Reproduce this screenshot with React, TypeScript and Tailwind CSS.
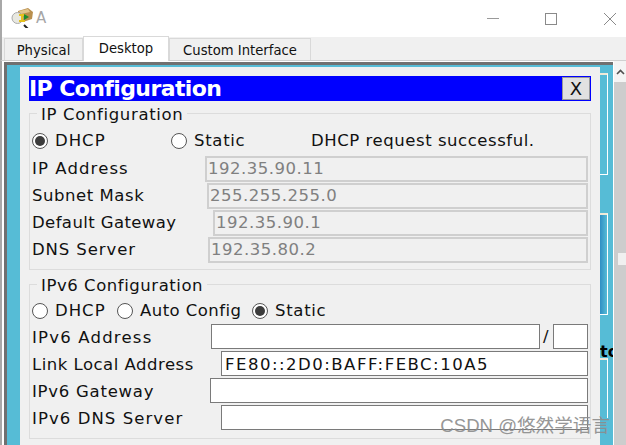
import React from 'react';

const Radio = ({ checked }: { checked?: boolean }) => (
  <span className="flex h-[16px] w-[16px] shrink-0 items-center justify-center rounded-full border border-[#555] bg-white">
    {checked && <span className="h-[10px] w-[10px] rounded-full bg-[#3c3c3c]" />}
  </span>
);

const ReadField = ({ label, left, value, mt }: { label: string; left: string; value: string; mt: string }) => (
  <div className={`flex h-[26px] items-center ${mt}`}>
    <span className={`${left} shrink-0 pt-[1px] whitespace-nowrap`}>{label}</span>
    <div className="flex h-full w-full items-center border-2 border-[#cfcfcf] bg-[#f0f0f0] pl-[1px] pt-[1px] tracking-[0.5px] text-[#808080]">{value}</div>
  </div>
);

const EditField = ({ label, left, value, mt }: { label: string; left: string; value?: string; mt: string }) => (
  <div className={`flex h-[25px] items-center ${mt}`}>
    <span className={`${left} shrink-0 pt-[4px] whitespace-nowrap`}>{label}</span>
    <div className="flex h-full w-full items-center border border-[#7a7a7a] bg-white pl-[3px] pt-[3px] tracking-[1.5px] text-[#111]">{value}</div>
  </div>
);

const Legend = ({ children, wide }: { children: React.ReactNode; wide?: boolean }) => (
  <span className={`absolute left-[7px] top-[-9px] bg-[#f0f0f0] px-[4px] leading-[20px] ${wide ? 'tracking-[0.55px]' : 'tracking-[0.65px]'}`}>{children}</span>
);

export default function App() {
  return (
    <div className="relative flex h-[445px] w-[626px] flex-col overflow-hidden bg-white font-['DejaVu_Sans',sans-serif] text-[16.5px] text-[#111]">
      {/* window title bar */}
      <div className="flex h-[37px] shrink-0 items-center border-l-2 border-[#a8a8a8] pl-[9px]">
        <svg width="22" height="22" viewBox="0 0 22 22" className="mt-[-3px]">
          <path d="M7 5 L17 2 L22 6 L21 13 L12 16 L8 12 Z" fill="#b98f4e" />
          <path d="M8 5 L17 3 L19 6 L10 8 Z" fill="#e2c58c" />
          <path d="M13 19 L17 23" stroke="#222" strokeWidth="2" />
          <circle cx="6.5" cy="12" r="5.5" fill="#e8e8e0" stroke="#aaa" />
          <path d="M8 8 H14 V10 H12 V14 H14 V16 H8 V14 H10 V10 H8 Z" fill="#e6c21c" />
          <path d="M13 8 L18 11 L13 14 Z" fill="#1c8c2c" />
        </svg>
        <span className="ml-[3px] text-[15px] text-[#a6a6a6]">A</span>
        <div className="ml-auto flex items-center">
          <span className="h-px w-[12px] bg-[#9a9a9a]" />
          <span className="ml-[46px] h-[12px] w-[12px] border border-[#8a8a8a]" />
          <svg width="14" height="14" viewBox="0 0 14 14" className="ml-[46px] mr-[9px]">
            <path d="M1 1 L13 13 M13 1 L1 13" stroke="#8a8a8a" strokeWidth="1" />
          </svg>
        </div>
      </div>

      {/* tab strip */}
      <div className="flex h-[24px] shrink-0 items-end border-b border-l-2 border-[#a8a8a8] border-b-[#d0d0d0] bg-[#f0f0f0] pl-[2px] text-[13.2px]">
        <div className="flex h-[22px] w-[79px] items-center justify-center border border-b-0 border-[#d9d9d9] pt-[2px]">Physical</div>
        <div className="flex h-[25px] w-[86px] translate-y-px items-center justify-center border-x border-t border-[#d9d9d9] bg-white pb-[1px]">Desktop</div>
        <div className="flex h-[22px] w-[142px] items-center justify-center border border-b-0 border-[#d9d9d9] pt-[2px]">Custom Interface</div>
      </div>

      {/* content */}
      <div className="flex min-h-0 flex-1 border-l-2 border-[#a8a8a8] pl-[2px]">
        <div className="mt-px flex min-w-0 flex-1 flex-col border-l-[3px] border-t-[3px] border-[#707070] bg-[#56bcd6]">
          <div className="flex min-h-0 flex-1 pt-[2px]">
            <div className="w-[13px] shrink-0" />
            {/* dialog */}
            <div className="h-[400px] w-[580px] shrink-0 bg-[#f0f0f0] pl-[9px] pr-[9px] pt-[9px]">
              <div className="flex h-[25px] items-center justify-between bg-[#0000ff] pr-px">
                <span className="text-[22px] font-bold leading-none tracking-[-0.6px] text-white">IP Configuration</span>
                <div className="flex h-[23px] w-[28px] items-center justify-center border border-[#999] bg-[#e1e1e1] text-[18px]">X</div>
              </div>

              <div className="relative mt-[12px] h-[157px] border border-[#dcdcdc] pl-[2px] pr-[2px]">
                <Legend>IP Configuration</Legend>
                <div className="flex h-[26px] items-center pt-[27px] leading-none">
                  <Radio checked />
                  <span className="ml-[7px] w-[116px] shrink-0 tracking-[1px]">DHCP</span>
                  <Radio />
                  <span className="ml-[7px] w-[117px] shrink-0 tracking-[0.7px]">Static</span>
                  <span className="whitespace-nowrap tracking-[0.55px]">DHCP request successful.</span>
                </div>
                <div className="mt-[15px]">
                  <ReadField label="IP Address" left="w-[173px] tracking-[1.1px]" value="192.35.90.11" mt="" />
                  <ReadField label="Subnet Mask" left="w-[175px] tracking-[0.55px]" value="255.255.255.0" mt="mt-px" />
                  <ReadField label="Default Gateway" left="w-[181px] tracking-[0.4px]" value="192.35.90.1" mt="mt-px" />
                  <ReadField label="DNS Server" left="w-[176px] tracking-[0.9px]" value="192.35.80.2" mt="mt-px" />
                </div>
              </div>

              <div className="relative mt-[14px] h-[155px] border border-[#dcdcdc] pl-[2px] pr-[2px]">
                <Legend wide>IPv6 Configuration</Legend>
                <div className="mt-[16px] flex h-[20px] items-center leading-none">
                  <Radio />
                  <span className="ml-[7px] w-[62px] shrink-0 tracking-[1px]">DHCP</span>
                  <Radio />
                  <span className="ml-[7px] w-[112px] shrink-0 tracking-[0.45px]">Auto Config</span>
                  <Radio checked />
                  <span className="ml-[7px] tracking-[0.7px]">Static</span>
                </div>
                <div className="mt-[3px] flex h-[25px] items-center">
                  <span className="w-[179px] shrink-0 whitespace-nowrap pt-[4px] tracking-[1.2px]">IPv6 Address</span>
                  <div className="h-full w-[329px] shrink-0 border border-[#7a7a7a] bg-white" />
                  <span className="w-[13px] shrink-0 pl-[3px] pt-[2px]">/</span>
                  <div className="h-full w-[35px] shrink-0 border border-[#7a7a7a] bg-white" />
                </div>
                <EditField label="Link Local Address" left="w-[189px] tracking-[0.5px]" value="FE80::2D0:BAFF:FEBC:10A5" mt="mt-[2px]" />
                <EditField label="IPv6 Gateway" left="w-[178px] tracking-[0.75px]" mt="mt-[2px]" />
                <EditField label="IPv6 DNS Server" left="w-[189px] tracking-[1.07px]" mt="mt-[2px]" />
              </div>
            </div>

            {/* what shows of the page behind the dialog */}
            <div className="flex w-[13px] shrink-0 flex-col overflow-hidden pt-[6px]">
              <div className="h-[102px] w-[8px] shrink-0 border-b border-r border-t-2 border-white border-t-[#f0ead8]" />
              <div className="mt-[38px] h-[102px] w-[8px] shrink-0 border-b border-r border-t-2 border-white border-t-[#f0ead8] bg-gradient-to-r from-[#2f8fc4] to-[#56bcd6]" />
              <div className="mt-[27px] text-[16px] font-bold leading-[20px] text-black">to</div>
              <div className="mt-[-4px] h-[60px] w-[8px] shrink-0 border-r border-t-2 border-white border-t-[#f0ead8]" />
            </div>
          </div>
        </div>

        {/* scrollbar */}
        <div className="flex w-[13px] shrink-0 flex-col border-l border-white bg-[#f0f0f0]">
          <div className="flex h-[21px] shrink-0 items-center justify-center bg-[#f4f4f4]">
            <svg width="9" height="6" viewBox="0 0 9 6">
              <path d="M1 5 L4.5 1.5 L8 5" fill="none" stroke="#505050" strokeWidth="1.6" />
            </svg>
          </div>
          <div className="flex-1 bg-[#cdcdcd] pl-[4px] pt-[171px]">
            <div className="h-[12px] bg-[#f0f0f0]" />
          </div>
        </div>
      </div>

      {/* watermark */}
      <div className="absolute right-[16px] top-[415px] font-['Liberation_Sans','Noto_Sans_CJK_SC',sans-serif] text-[18.6px] leading-[22px] text-[#8c8c8c] opacity-90">
        CSDN @悠然学语言
      </div>
    </div>
  );
}
